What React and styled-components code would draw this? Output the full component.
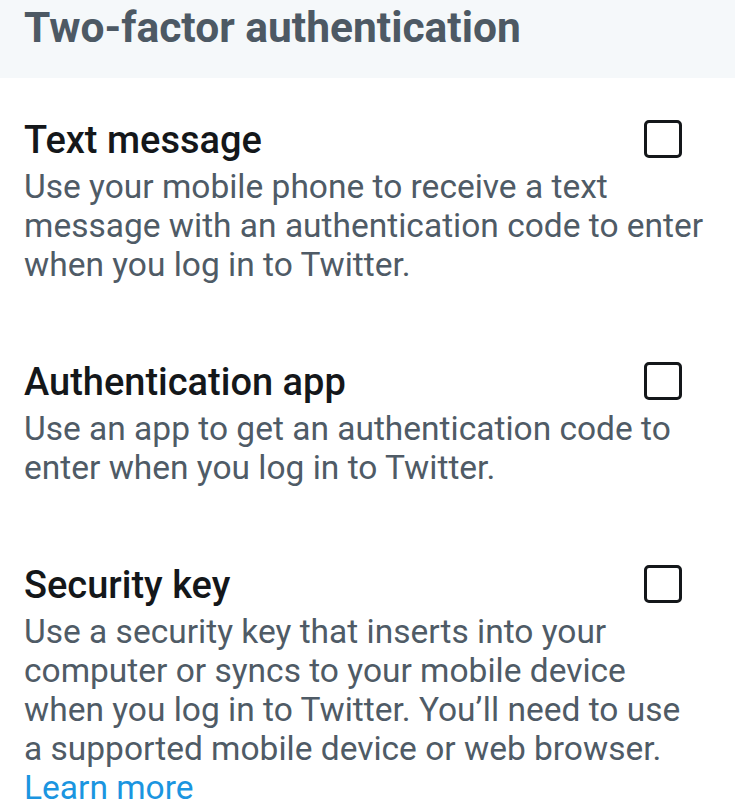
import React from "react";
import styled, { createGlobalStyle } from "styled-components";

const GlobalStyle = createGlobalStyle`
  html, body {
    margin: 0;
    padding: 0;
    background: #ffffff;
  }
  body {
    font-family: Roboto, "Noto Sans", "Liberation Sans", sans-serif;
    -webkit-font-smoothing: antialiased;
  }
`;

const Page = styled.div`
  width: 735px;
  min-height: 812px;
  overflow: hidden;
  background: #ffffff;
`;

const Header = styled.header`
  height: 78px;
  box-sizing: border-box;
  padding-left: 24px;
  background: #f5f8fa;
`;

const HeaderTitle = styled.h1`
  margin: 0;
  font-size: 42.5px;
  line-height: 55px;
  font-weight: 700;
  color: #4d5964;
`;

const Options = styled.div`
  display: flex;
  flex-direction: column;
  gap: 78px;
  padding: 42px 30px 0 24px;
`;

const Option = styled.section`
  display: flex;
  flex-direction: column;
  gap: 7px;
`;

const TitleRow = styled.div`
  display: flex;
  align-items: flex-start;
  justify-content: space-between;
`;

const OptionTitle = styled.h2`
  margin: 0;
  font-size: 38px;
  line-height: 40px;
  font-weight: 500;
  color: #14171a;
`;

const Checkbox = styled.input.attrs({ type: "checkbox" })`
  appearance: none;
  margin: 0 23px 0 0;
  width: 38px;
  height: 38px;
  box-sizing: border-box;
  border: 3px solid #14171a;
  border-radius: 5px;
  background: #ffffff;
  flex-shrink: 0;
`;

const Description = styled.p`
  margin: 0;
  font-size: 33.5px;
  line-height: 39px;
  font-weight: 400;
  color: #4f5b66;
`;

const LearnMore = styled.a`
  color: #1b95e0;
  text-decoration: none;
`;

const options = [
  {
    title: "Text message",
    text: "Use your mobile phone to receive a text message with an authentication code to enter when you log in to Twitter.",
  },
  {
    title: "Authentication app",
    text: "Use an app to get an authentication code to enter when you log in to Twitter.",
  },
  {
    title: "Security key",
    text: "Use a security key that inserts into your computer or syncs to your mobile device when you log in to Twitter. You’ll need to use a supported mobile device or web browser.",
    link: true,
  },
];

export default function App() {
  return (
    <Page>
      <GlobalStyle />
      <Header>
        <HeaderTitle>Two-factor authentication</HeaderTitle>
      </Header>
      <Options>
        {options.map((o) => (
          <Option key={o.title}>
            <TitleRow>
              <OptionTitle>{o.title}</OptionTitle>
              <Checkbox aria-label={o.title} />
            </TitleRow>
            <Description>
              {o.text}
              {o.link && (
                <>
                  {" "}
                  <LearnMore href="#">Learn more</LearnMore>
                </>
              )}
            </Description>
          </Option>
        ))}
      </Options>
    </Page>
  );
}
